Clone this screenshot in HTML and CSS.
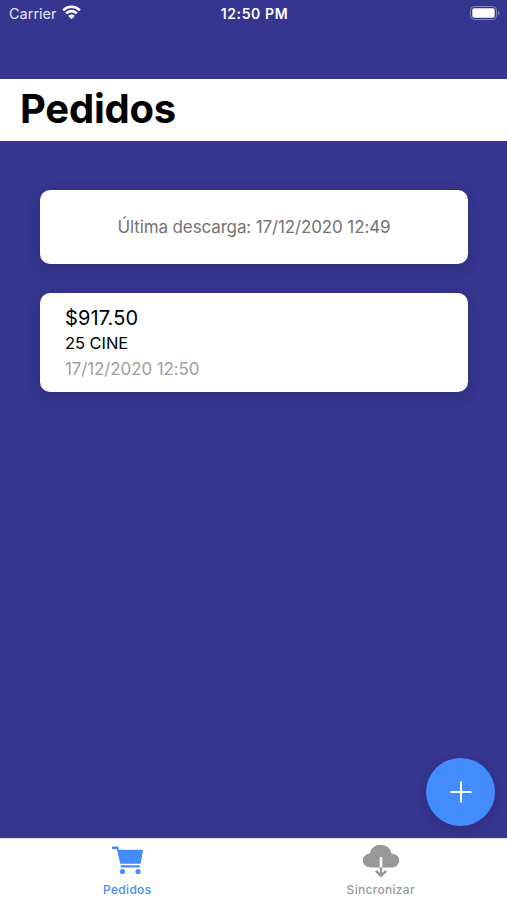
FILE: index.html
```
<!DOCTYPE html>
<html lang="es">
<head>
    <meta charset="UTF-8">
    <meta name="viewport" content="width=device-width, initial-scale=1.0">
    <title>Pedidos</title>
    <link rel="stylesheet" href="styles.css">
</head>
<body>
    <div class="status-bar">
        <div class="carrier">
            <span>Carrier</span>
            <svg class="wifi" viewBox="0 0 18 14" width="19" height="15">
                <path d="M1.1 4.9a11.2 11.2 0 0 1 15.8 0M3.9 7.8a7.2 7.2 0 0 1 10.2 0" fill="none" stroke="#fff" stroke-width="2.4"/>
                <path d="M5.9 10.1a4.4 4.4 0 0 1 6.2 0L9 13.3z" fill="#fff"/>
            </svg>
        </div>
        <span class="clock">12:50 PM</span>
        <svg class="battery" viewBox="0 0 30 14" width="30" height="14">
            <rect x=".5" y=".5" width="26" height="13" rx="3.8" fill="none" stroke="#8583bd"/>
            <rect x="2.3" y="2.3" width="22.4" height="9.4" rx="2" fill="#fff"/>
            <path d="M28 4.8c2 .8 2 3.6 0 4.4z" fill="#8583bd"/>
        </svg>
    </div>

    <header class="header">
        <h1>Pedidos</h1>
    </header>

    <main class="content">
        <div class="card download-card">
            <p>Última descarga: 17/12/2020 12:49</p>
        </div>
        <div class="card order-card">
            <p class="order-total">$917.50</p>
            <p class="order-client">25 CINE</p>
            <p class="order-date">17/12/2020 12:50</p>
        </div>
    </main>

    <button class="fab" aria-label="Agregar">
        <svg viewBox="0 0 22 22" width="22" height="22">
            <path d="M11 .5v21M.5 11h21" stroke="#fff" stroke-width="2"/>
        </svg>
    </button>

    <nav class="tabs">
        <a class="tab active">
            <svg viewBox="0 0 32 31" width="32" height="31" fill="currentColor">
                <path d="M.9 2.4Q.9 1.6 1.8 1.6h5.3l.8 3.1h22.9q1.2 0 1 1.2l-1.9 11.6q-.2 1.2-1.4 1.2H9.3L5.8 4H1.8Q.9 4 .9 3.2z"/>
                <path d="M9.3 20.2h19.5v2.3H9.9z"/>
                <circle cx="11.4" cy="26.5" r="2.6"/>
                <circle cx="27" cy="26.5" r="2.6"/>
            </svg>
            <span>Pedidos</span>
        </a>
        <a class="tab">
            <svg class="cloud" viewBox="0 0 38 34" width="38" height="34">
                <path d="M9.3 23.4C4 23.4.8 20.5.8 16.4c0-3.8 2.9-6.4 6.9-6.9C8.9 4.1 13.4.8 18.8.8c5.6 0 9.7 3.8 10.5 8.7 4.7.3 7.9 2.8 7.9 6.9 0 4.2-3.2 7-7.7 7z" fill="currentColor"/>
                <path d="M19 13v10.4" fill="none" stroke="#fff" stroke-width="2.6"/>
                <path d="M19 23.4v8.2M13.8 26.9l5.2 5 5.2-5" fill="none" stroke="currentColor" stroke-width="2.4"/>
            </svg>
            <span>Sincronizar</span>
        </a>
    </nav>
</body>
</html>
```
FILE: styles.css
```
:root {
    --primary: #36358f;
    --accent: #428cff;
    --muted: #989898;
}

* {
    margin: 0;
    padding: 0;
    box-sizing: border-box;
}

body {
    height: 100vh;
    display: flex;
    flex-direction: column;
    position: relative;
    overflow: hidden;
    background: var(--primary);
    color: #000;
    font-family: Inter, "Liberation Sans", sans-serif;
}

/* Barra de estado */
.status-bar {
    height: 79px;
    padding: 6px 7px 0 9px;
    display: grid;
    grid-template-columns: 1fr auto 1fr;
    align-items: start;
    color: #fff;
    font-size: 14.5px;
    line-height: 16px;
}

.carrier {
    display: flex;
    gap: 5px;
    color: #e5e5f5;
}

.wifi {
    margin-top: -1px;
}

.clock {
    font-weight: 600;
    font-size: 14px;
    letter-spacing: 0.6px;
}

.battery {
    justify-self: end;
}

/* Encabezado */
.header {
    height: 62px;
    padding-left: 20px;
    background: #fff;
}

.header h1 {
    font-size: 40px;
    line-height: 60px;
    letter-spacing: -0.25px;
}

/* Tarjetas */
.content {
    flex: 1;
    display: flex;
    flex-direction: column;
    gap: 29px;
    padding: 49px 39px 0 40px;
}

.card {
    background: #fff;
    border-radius: 10px;
    box-shadow: 0 4px 16px rgba(0, 0, 0, 0.12);
}

.download-card {
    height: 74px;
    display: flex;
    align-items: center;
    justify-content: center;
    color: #737373;
    font-size: 17px;
    letter-spacing: -0.13px;
}

.order-card {
    height: 99px;
    padding: 12px 25px;
}

.order-total {
    font-size: 20px;
    line-height: 26px;
    letter-spacing: 0.1px;
}

.order-client {
    font-size: 16.5px;
    line-height: 25px;
    letter-spacing: -0.05px;
}

.order-date {
    color: #a0a0a0;
    font-size: 17px;
    line-height: 26px;
    letter-spacing: -0.12px;
}

/* Botón flotante */
.fab {
    position: absolute;
    right: 12px;
    bottom: 74px;
    width: 69px;
    height: 68px;
    display: grid;
    place-items: center;
    border: none;
    border-radius: 50%;
    background: var(--accent);
    box-shadow: 0 3px 12px rgba(0, 0, 0, 0.12);
}

/* Pestañas */
.tabs {
    height: 62px;
    display: flex;
    background: #fff;
    border-top: 1px solid #dcdcea;
}

.tab {
    flex: 1;
    display: flex;
    flex-direction: column;
    align-items: center;
    justify-content: space-between;
    padding: 6px 0 3px 1px;
    color: var(--muted);
    font-size: 12px;
    font-weight: 500;
    line-height: 15px;
    letter-spacing: 0.3px;
}

.tab.active {
    color: var(--accent);
}

.cloud {
    margin-top: -1px;
}
```
